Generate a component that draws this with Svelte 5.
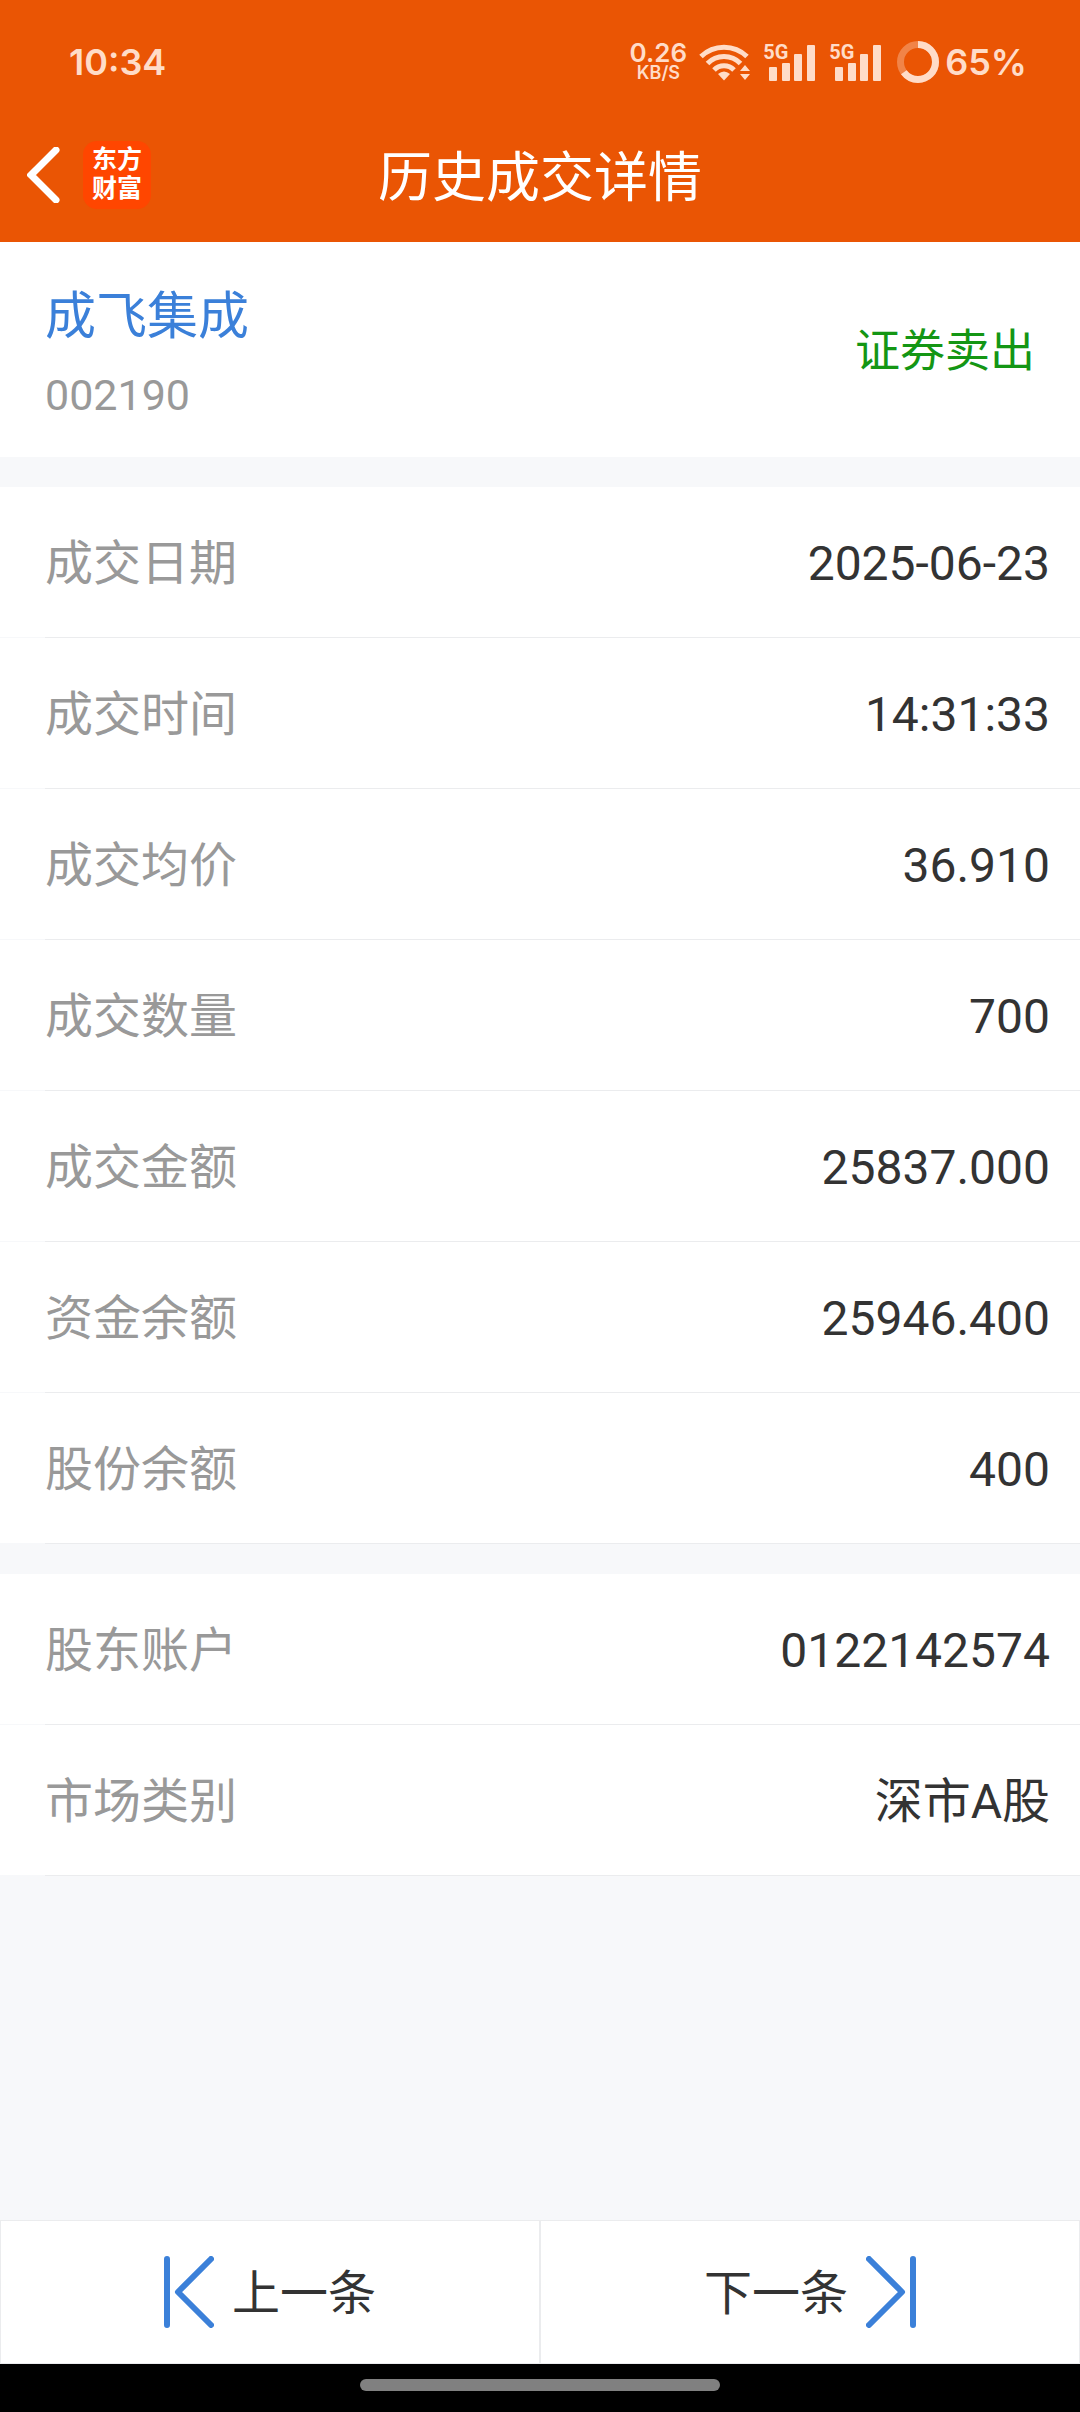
<script lang="ts">
  type Row = { label: string; value: string };

  let stock = { name: "成飞集成", code: "002190", action: "证券卖出" };

  let groups: Row[][] = [
    [
      { label: "成交日期", value: "2025-06-23" },
      { label: "成交时间", value: "14:31:33" },
      { label: "成交均价", value: "36.910" },
      { label: "成交数量", value: "700" },
      { label: "成交金额", value: "25837.000" },
      { label: "资金余额", value: "25946.400" },
      { label: "股份余额", value: "400" },
    ],
    [
      { label: "股东账户", value: "0122142574" },
      { label: "市场类别", value: "深市A股" },
    ],
  ];

  let signals = [1, 2];
</script>

<div class="page">
  <header class="header">
    <div class="status-bar">
      <span class="clock">10:34</span>
      <div class="status-icons">
        <div class="speed">
          <span class="speed-value">0.26</span>
          <span class="speed-unit">KB/S</span>
        </div>
        <svg class="wifi" width="52" height="38" viewBox="0 0 52 38" aria-hidden="true">
          <g fill="none" stroke="currentColor" stroke-width="5">
            <path d="M2 13.500A33 33 0 0 1 48 13.500" />
            <path d="M8.500 20.500A23 23 0 0 1 41.500 20.500" />
            <path d="M15 27A14 14 0 0 1 35 27" />
          </g>
          <path d="M19 31Q25 26 31 31L25 37.500Z" fill="currentColor" />
          <path d="M46 22L51 28H41ZM46 37L41 31H51Z" fill="currentColor" />
        </svg>
        {#each signals as sim (sim)}
          <div class="signal">
            <span class="signal-type">5G</span>
            <svg width="46" height="38" viewBox="0 0 46 38" aria-hidden="true">
              <g fill="currentColor">
                <rect x="0" y="24" width="8" height="14" rx="1" />
                <rect x="13" y="20" width="8" height="18" rx="1" />
                <rect x="25" y="11" width="8" height="27" rx="1" />
                <rect x="38" y="2" width="8" height="36" rx="1" />
              </g>
            </svg>
          </div>
        {/each}
        <svg class="battery" width="42" height="42" viewBox="0 0 42 42" aria-hidden="true">
          <g fill="none" stroke="currentColor" stroke-width="7">
            <circle cx="21" cy="21" r="17.500" opacity="0.35" />
            <circle cx="21" cy="21" r="17.500" pathLength="100" stroke-dasharray="65 35" transform="rotate(-90 21 21)" />
          </g>
        </svg>
        <span class="clock">65%</span>
      </div>
    </div>

    <nav class="nav">
      <div class="nav-left">
        <button class="back" aria-label="返回">
          <svg width="34" height="56" viewBox="0 0 34 56" aria-hidden="true">
            <path d="M29 3L4 28L29 53" fill="none" stroke="#fff" stroke-width="7" stroke-linecap="round" />
          </svg>
        </button>
        <a class="logo" href="#home">东方<br />财富</a>
      </div>
      <h1 class="title">历史成交详情</h1>
      <div></div>
    </nav>
  </header>

  <main class="content">
    <section class="stock">
      <div class="stock-info">
        <a class="stock-name" href="#stock">{stock.name}</a>
        <span class="stock-code">{stock.code}</span>
      </div>
      <span class="stock-action">{stock.action}</span>
    </section>

    {#each groups as rows}
      <dl class="group">
        {#each rows as row (row.label)}
          <div class="row">
            <div class="row-inner">
              <dt>{row.label}</dt>
              <dd>{row.value}</dd>
            </div>
          </div>
        {/each}
      </dl>
    {/each}
  </main>

  <footer class="pager">
    <button class="pager-button">
      <svg width="50" height="72" viewBox="0 0 50 72" aria-hidden="true">
        <path d="M3 3V69M47 3L14 36L47 69" />
      </svg>
      <span>上一条</span>
    </button>
    <button class="pager-button">
      <span>下一条</span>
      <svg width="50" height="72" viewBox="0 0 50 72" aria-hidden="true">
        <path d="M47 3V69M3 3L36 36L3 69" />
      </svg>
    </button>
  </footer>

  <div class="gesture-bar">
    <div class="gesture-pill"></div>
  </div>
</div>

<style>
  :global(body) {
    margin: 0;
    background: #f7f8fa;
  }

  .page {
    min-height: 100vh;
    display: flex;
    flex-direction: column;
    font-family: Roboto, "Noto Sans CJK SC", sans-serif;
    color: #333;
    background: #f7f8fa;
  }

  .header {
    background: #ea5504;
    color: #fff;
  }

  .status-bar {
    height: 108px;
    padding: 16px 53px 0 69px;
    box-sizing: border-box;
    display: flex;
    align-items: center;
    justify-content: space-between;
    font-family: Inter, sans-serif;
    font-weight: 600;
    color: #ffdcc8;
  }

  .clock {
    font-size: 36px;
    line-height: 40px;
  }

  .status-icons {
    display: flex;
    align-items: center;
    gap: 12px;
  }

  .speed {
    display: flex;
    flex-direction: column;
    align-items: center;
    gap: 2px;
  }

  .speed-value {
    font-size: 26px;
    line-height: 20px;
  }

  .speed-unit {
    font-size: 18px;
    line-height: 16px;
  }

  .signal {
    position: relative;
    display: flex;
    padding-left: 6px;
  }

  .signal-type {
    position: absolute;
    left: 0;
    top: 0;
    font-family: Roboto, sans-serif;
    font-size: 20px;
    font-weight: 700;
    line-height: 18px;
  }

  .signal + .signal {
    margin-left: 2px;
  }

  .battery {
    margin-left: 4px;
    margin-right: -6px;
  }

  .nav {
    height: 134px;
    padding: 0 27px;
    display: grid;
    grid-template-columns: 1fr auto 1fr;
    align-items: center;
  }

  .nav-left {
    display: flex;
    align-items: center;
    gap: 22px;
  }

  button {
    margin: 0;
    padding: 0;
    border: none;
    background: none;
    font: inherit;
    color: inherit;
    cursor: pointer;
  }

  .back {
    display: flex;
  }

  .logo {
    width: 68px;
    height: 68px;
    padding-top: 4px;
    box-sizing: border-box;
    border-radius: 14px;
    background: #ff4600;
    color: #fff;
    font-size: 25px;
    font-weight: 700;
    line-height: 29px;
    text-align: center;
    text-decoration: none;
  }

  .title {
    margin: 0;
    padding-top: 8px;
    font-size: 54px;
    line-height: 72px;
    font-weight: 400;
  }

  .content {
    flex: 1;
  }

  .stock {
    padding: 37px 45px 32px;
    display: flex;
    align-items: center;
    justify-content: space-between;
    background: #fff;
  }

  .stock-info {
    display: flex;
    flex-direction: column;
  }

  .stock-name {
    font-size: 51px;
    line-height: 75px;
    color: #3b80d9;
    text-decoration: none;
  }

  .stock-code {
    padding-top: 11px;
    font-size: 43px;
    line-height: 60px;
    color: #999;
  }

  .stock-action {
    font-size: 45px;
    line-height: 60px;
    color: #149614;
  }

  .group {
    margin: 30px 0 0;
  }

  .row::after {
    content: "";
    display: block;
    height: 1px;
    margin-left: 45px;
    background: #ebecee;
  }

  .row-inner {
    height: 150px;
    padding: 4px 30px 0 45px;
    box-sizing: border-box;
    display: flex;
    align-items: center;
    justify-content: space-between;
    background: #fff;
    font-size: 48px;
    line-height: 72px;
  }

  dt {
    color: #999;
  }

  dd {
    margin: 0;
  }

  .pager {
    display: flex;
  }

  .pager-button {
    flex: 1;
    height: 144px;
    display: flex;
    align-items: center;
    justify-content: center;
    gap: 18px;
    border: 1px solid #ebecee;
    background: #fff;
    font-size: 48px;
    line-height: 72px;
  }

  .pager-button span {
    padding-top: 4px;
  }

  .pager-button path {
    fill: none;
    stroke: #3b80d9;
    stroke-width: 6;
    stroke-linecap: round;
    stroke-linejoin: round;
  }

  .gesture-bar {
    height: 48px;
    padding-top: 15px;
    box-sizing: border-box;
    background: #000;
  }

  .gesture-pill {
    width: 33.333%;
    height: 12px;
    margin: 0 auto;
    border-radius: 6px;
    background: #808080;
  }
</style>
